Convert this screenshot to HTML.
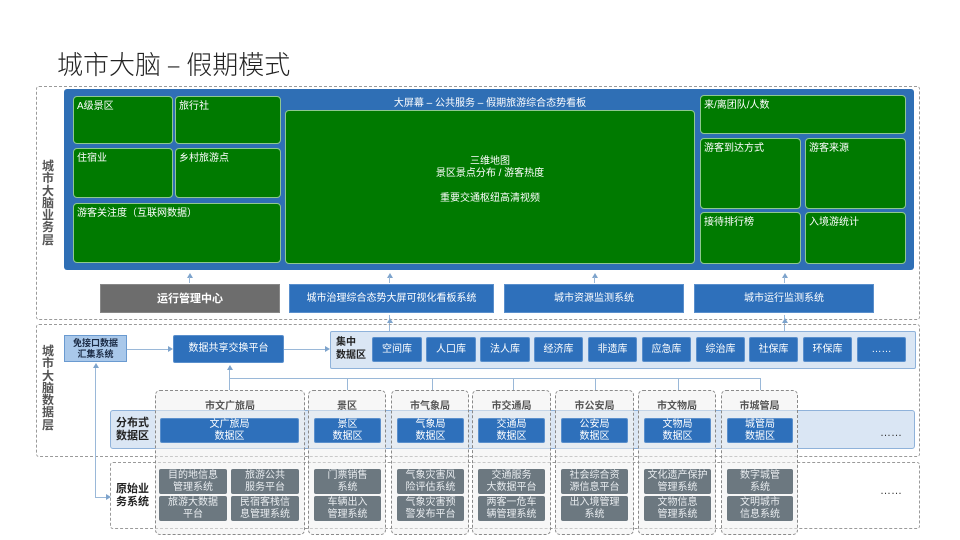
<!DOCTYPE html>
<html><head><meta charset="utf-8"><style>
*{margin:0;padding:0;box-sizing:border-box}
body{width:960px;height:540px;background:#fff;position:relative;overflow:hidden;font-family:"Liberation Sans","Noto Sans CJK SC",sans-serif}
div{position:absolute}
.t{font-size:10px;color:#fff}
.g{background:#007a00;border:1.5px solid #8fc88f;border-radius:4px;color:#fff;font-size:10px;padding:4px 3px;line-height:12px}
.b{background:#2e70bb;color:#fff;font-size:10px;display:flex;align-items:center;justify-content:center;text-align:center;line-height:12px;border:1px solid #5a8fcc}
.gr{background:#6c7880;color:#e8ecef;font-size:10px;display:flex;align-items:center;justify-content:center;text-align:center;line-height:12px;border-radius:2px}
.dash{border:1px dashed #9a9a9a;border-radius:3px}
.dept{border:1px dashed #8a8a8a;border-radius:5px;background:rgba(240,240,240,0.55)}
.dh{font-size:10px;color:#555;font-weight:bold;text-align:center;width:100%;top:6px}
.lbl{font-size:11px;font-weight:bold;color:#222;line-height:13px}
.vl{font-size:12px;font-weight:bold;color:#555;width:14px;line-height:12.3px;text-align:center}
.ln{background:#9ab8d8}
.ar{width:0;height:0;border-left:3px solid transparent;border-right:3px solid transparent;border-bottom:5px solid #7da3cc}
.arr{width:0;height:0;border-top:3px solid transparent;border-bottom:3px solid transparent;border-left:5px solid #7da3cc}
</style></head><body>
<div style="left:57px;top:47px;font-size:26px;font-weight:300;color:#222;line-height:34px;font-family:'Noto Sans CJK SC',sans-serif">城市大脑 – 假期模式</div>

<div class="dash" style="left:36px;top:86px;width:884px;height:234px"></div>
<div class="vl" style="left:41px;top:160px">城市大脑业务层</div>
<div style="left:64px;top:89px;width:850px;height:181px;background:#2f6fb5;border-radius:3px"></div>
<div class="g" style="left:73px;top:96px;width:100px;height:48px">A级景区</div>
<div class="g" style="left:175px;top:96px;width:106px;height:48px">旅行社</div>
<div class="g" style="left:73px;top:148px;width:100px;height:50px">住宿业</div>
<div class="g" style="left:175px;top:148px;width:106px;height:50px">乡村旅游点</div>
<div class="g" style="left:73px;top:203px;width:208px;height:60px">游客关注度（互联网数据）</div>
<div class="t" style="left:286px;top:94px;width:408px;text-align:center">大屏幕 – 公共服务 – 假期旅游综合态势看板</div>
<div class="g" style="left:285px;top:110px;width:410px;height:154px;text-align:center;padding-top:45px">三维地图<br>景区景点分布 / 游客热度<br><br><div style="position:static;margin-top:1px">重要交通枢纽高清视频</div></div>
<div class="g" style="left:700px;top:95px;width:206px;height:39px">来/离团队/人数</div>
<div class="g" style="left:700px;top:138px;width:101px;height:71px">游客到达方式</div>
<div class="g" style="left:805px;top:138px;width:101px;height:71px">游客来源</div>
<div class="g" style="left:700px;top:212px;width:101px;height:52px">接待排行榜</div>
<div class="g" style="left:805px;top:212px;width:101px;height:52px">入境游统计</div>

<div class="ar" style="left:187px;top:273px"></div><div class="ln" style="left:189px;top:277px;width:1px;height:6px"></div>
<div class="ar" style="left:387px;top:273px"></div><div class="ln" style="left:389px;top:277px;width:1px;height:6px"></div>
<div class="ar" style="left:592px;top:273px"></div><div class="ln" style="left:594px;top:277px;width:1px;height:6px"></div>
<div class="ar" style="left:782px;top:273px"></div><div class="ln" style="left:784px;top:277px;width:1px;height:6px"></div>

<div class="b" style="left:100px;top:284px;width:180px;height:29px;background:#6d6d6d;border-color:#888;font-weight:bold;font-size:11px">运行管理中心</div>
<div class="b" style="left:289px;top:284px;width:205px;height:29px">城市治理综合态势大屏可视化看板系统</div>
<div class="b" style="left:504px;top:284px;width:180px;height:29px">城市资源监测系统</div>
<div class="b" style="left:694px;top:284px;width:180px;height:29px">城市运行监测系统</div>
<div class="ln" style="left:389px;top:315px;width:1px;height:16px"></div><div class="ar" style="left:387px;top:318px"></div>
<div class="ln" style="left:784px;top:315px;width:1px;height:16px"></div><div class="ar" style="left:782px;top:318px"></div>

<div class="dash" style="left:36px;top:324px;width:884px;height:133px"></div>
<div class="vl" style="left:41px;top:345px">城市大脑数据层</div>
<div style="left:64px;top:335px;width:63px;height:27px;background:#a9c8ea;border:1px solid #6a9ad0;font-size:9px;font-weight:bold;color:#1a2a44;text-align:center;line-height:11px;padding-top:2px">免接口数据<br>汇集系统</div>
<div class="b" style="left:173px;top:335px;width:111px;height:28px;border-radius:2px">数据共享交换平台</div>
<div class="ln" style="left:127px;top:349px;width:42px;height:1px"></div><div class="arr" style="left:168px;top:346px"></div>
<div class="ln" style="left:284px;top:349px;width:42px;height:1px"></div><div class="arr" style="left:325px;top:346px"></div>
<div style="left:330px;top:331px;width:586px;height:38px;background:#dae6f4;border:1px solid #8fb2da;border-radius:2px"></div>
<div class="lbl" style="left:336px;top:336px;font-size:10px;line-height:13px">集中<br>数据区</div>
<div class="b" style="left:372px;top:337px;width:50px;height:25px;border-radius:2px">空间库</div>
<div class="b" style="left:426px;top:337px;width:50px;height:25px;border-radius:2px">人口库</div>
<div class="b" style="left:480px;top:337px;width:50px;height:25px;border-radius:2px">法人库</div>
<div class="b" style="left:534px;top:337px;width:49px;height:25px;border-radius:2px">经济库</div>
<div class="b" style="left:588px;top:337px;width:49px;height:25px;border-radius:2px">非遗库</div>
<div class="b" style="left:642px;top:337px;width:49px;height:25px;border-radius:2px">应急库</div>
<div class="b" style="left:696px;top:337px;width:49px;height:25px;border-radius:2px">综治库</div>
<div class="b" style="left:749px;top:337px;width:49px;height:25px;border-radius:2px">社保库</div>
<div class="b" style="left:803px;top:337px;width:49px;height:25px;border-radius:2px">环保库</div>
<div class="b" style="left:857px;top:337px;width:49px;height:25px;border-radius:2px">……</div>

<div class="ln" style="left:229px;top:366px;width:1px;height:24px"></div><div class="ar" style="left:227px;top:365px"></div>
<div class="ln" style="left:229px;top:378px;width:532px;height:1px"></div>
<div class="ln" style="left:347px;top:378px;width:1px;height:12px"></div>
<div class="ln" style="left:432px;top:378px;width:1px;height:12px"></div>
<div class="ln" style="left:513px;top:378px;width:1px;height:12px"></div>
<div class="ln" style="left:595px;top:378px;width:1px;height:12px"></div>
<div class="ln" style="left:678px;top:378px;width:1px;height:12px"></div>
<div class="ln" style="left:760px;top:378px;width:1px;height:12px"></div>
<div class="ln" style="left:95px;top:366px;width:1px;height:131px"></div><div class="ar" style="left:93px;top:363px"></div>
<div class="ln" style="left:95px;top:497px;width:12px;height:1px"></div><div class="arr" style="left:106px;top:494px"></div>

<div style="left:110px;top:410px;width:805px;height:39px;background:#dae6f4;border:1px solid #8fb2da;border-radius:3px"></div>
<div class="lbl" style="left:116px;top:417px">分布式<br>数据区</div>
<div style="left:880px;top:427px;font-size:11px;color:#333">……</div>
<div class="dash" style="left:110px;top:462px;width:810px;height:67px"></div>
<div class="lbl" style="left:116px;top:483px">原始业<br>务系统</div>
<div style="left:880px;top:485px;font-size:11px;color:#333">……</div>

<div class="dept" style="left:155px;top:390px;width:150px;height:145px"><div class="dh">市文广旅局</div></div>
<div class="dept" style="left:308px;top:390px;width:78px;height:145px"><div class="dh">景区</div></div>
<div class="dept" style="left:391px;top:390px;width:78px;height:145px"><div class="dh">市气象局</div></div>
<div class="dept" style="left:472px;top:390px;width:79px;height:145px"><div class="dh">市交通局</div></div>
<div class="dept" style="left:555px;top:390px;width:79px;height:145px"><div class="dh">市公安局</div></div>
<div class="dept" style="left:638px;top:390px;width:78px;height:145px"><div class="dh">市文物局</div></div>
<div class="dept" style="left:721px;top:390px;width:77px;height:145px"><div class="dh">市城管局</div></div>

<div class="b" style="left:160px;top:418px;width:139px;height:25px;border-radius:2px">文广旅局<br>数据区</div>
<div class="b" style="left:314px;top:418px;width:67px;height:25px;border-radius:2px">景区<br>数据区</div>
<div class="b" style="left:397px;top:418px;width:67px;height:25px;border-radius:2px">气象局<br>数据区</div>
<div class="b" style="left:478px;top:418px;width:67px;height:25px;border-radius:2px">交通局<br>数据区</div>
<div class="b" style="left:561px;top:418px;width:67px;height:25px;border-radius:2px">公安局<br>数据区</div>
<div class="b" style="left:644px;top:418px;width:67px;height:25px;border-radius:2px">文物局<br>数据区</div>
<div class="b" style="left:727px;top:418px;width:66px;height:25px;border-radius:2px">城管局<br>数据区</div>

<div class="gr" style="left:159px;top:469px;width:68px;height:25px">目的地信息<br>管理系统</div>
<div class="gr" style="left:231px;top:469px;width:68px;height:25px">旅游公共<br>服务平台</div>
<div class="gr" style="left:159px;top:496px;width:68px;height:25px">旅游大数据<br>平台</div>
<div class="gr" style="left:231px;top:496px;width:68px;height:25px">民宿客栈信<br>息管理系统</div>
<div class="gr" style="left:314px;top:469px;width:67px;height:25px">门票销售<br>系统</div>
<div class="gr" style="left:314px;top:496px;width:67px;height:25px">车辆出入<br>管理系统</div>
<div class="gr" style="left:397px;top:469px;width:67px;height:25px">气象灾害风<br>险评估系统</div>
<div class="gr" style="left:397px;top:496px;width:67px;height:25px">气象灾害预<br>警发布平台</div>
<div class="gr" style="left:478px;top:469px;width:67px;height:25px">交通服务<br>大数据平台</div>
<div class="gr" style="left:478px;top:496px;width:67px;height:25px">两客一危车<br>辆管理系统</div>
<div class="gr" style="left:561px;top:469px;width:67px;height:25px">社会综合资<br>源信息平台</div>
<div class="gr" style="left:561px;top:496px;width:67px;height:25px">出入境管理<br>系统</div>
<div class="gr" style="left:644px;top:469px;width:67px;height:25px">文化遗产保护<br>管理系统</div>
<div class="gr" style="left:644px;top:496px;width:67px;height:25px">文物信息<br>管理系统</div>
<div class="gr" style="left:727px;top:469px;width:66px;height:25px">数字城管<br>系统</div>
<div class="gr" style="left:727px;top:496px;width:66px;height:25px">文明城市<br>信息系统</div>
</body></html>
